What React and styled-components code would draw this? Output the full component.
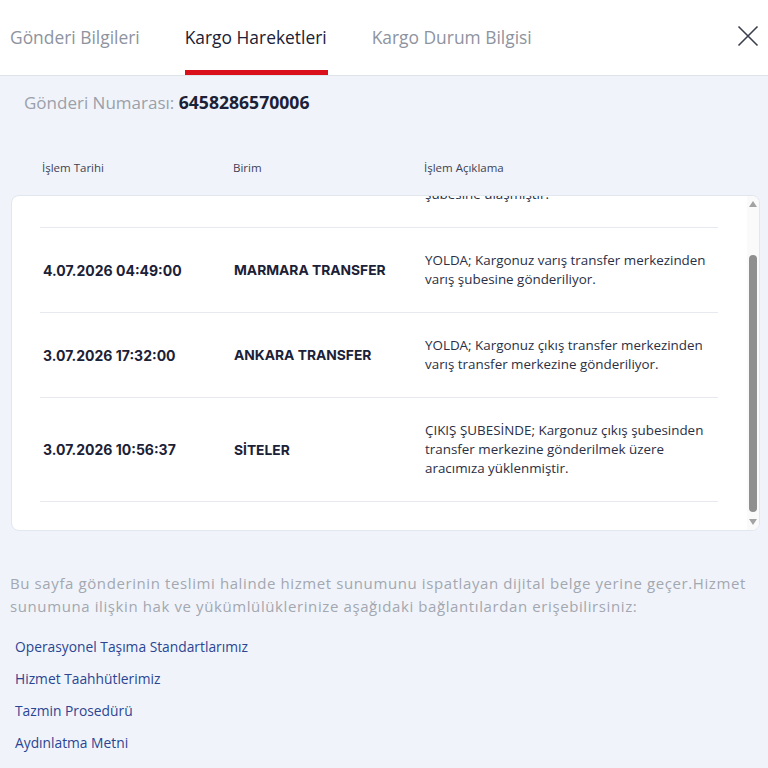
import { useEffect, useRef } from "react";
import styled, { createGlobalStyle } from "styled-components";

const GlobalStyle = createGlobalStyle`
  html, body {
    margin: 0;
    padding: 0;
    background: #f0f4fa;
    font-family: "Open Sans", "Liberation Sans", sans-serif;
  }
  * { box-sizing: border-box; }
`;

const Page = styled.div`
  width: 768px;
  min-height: 768px;
  background: #f0f4fa;
`;

const Header = styled.div`
  height: 76px;
  background: #ffffff;
  border-bottom: 1px solid #dfe3ea;
  display: flex;
  align-items: stretch;
  padding: 0 8px 0 10px;
`;

const Tabs = styled.div`
  display: flex;
  gap: 45px;
  flex: 1;
`;

const Tab = styled.div`
  position: relative;
  display: flex;
  align-items: center;
  padding-bottom: 2px;
  font-size: 17.4px;
  font-weight: 500;
  color: ${(p) => (p.$active ? "#1b2136" : "#8e93a0")};

  &::after {
    content: "";
    display: ${(p) => (p.$active ? "block" : "none")};
    position: absolute;
    left: 0;
    right: -1px;
    bottom: 0;
    height: 5px;
    background: #d9101b;
  }
`;

const CloseBtn = styled.button`
  border: none;
  background: none;
  padding: 0;
  width: 24px;
  height: 24px;
  align-self: center;
  margin-top: -3px;
  cursor: pointer;
`;

const Number = styled.div`
  padding: 14px 24px 0;
  font-size: 17px;
  color: #9ba0ab;
  height: 56px;

  b {
    color: #1b2136;
    font-weight: 700;
    font-size: 17.6px;
  }
`;

const TableHead = styled.div`
  display: grid;
  grid-template-columns: 191px 191px 1fr;
  padding: 28px 0 0 42px;
  height: 63px;
  font-size: 11.5px;
  color: #3d4254;
`;

const Card = styled.div`
  display: flex;
  margin: 0 8px 0 11px;
  height: 336px;
  background: #ffffff;
  border: 1px solid #e2e6ee;
  border-radius: 8px;
  overflow: hidden;
`;

const ScrollArea = styled.div`
  flex: 1;
  overflow: hidden;
`;

const Rows = styled.div`
  padding: 20px 29px 28px 28px;
`;

const Scrollbar = styled.div`
  width: 12px;
  display: flex;
  flex-direction: column;
  align-items: center;
  background: #fafafa;
`;

const Arrow = styled.div`
  height: 16px;
  display: flex;
  align-items: center;
  justify-content: center;
`;

const Thumb = styled.div`
  width: 8px;
  height: 257px;
  margin-top: 43px;
  margin-bottom: auto;
  border-radius: 4px;
  background: #8f8f8f;
`;

const Row = styled.div`
  display: grid;
  grid-template-columns: 191px 191px 1fr;
  align-items: center;
  min-height: ${(p) => p.$h}px;
  border-bottom: 1px solid #e6e9ef;
  padding-left: 3px;
`;

const DateCell = styled.div`
  font-family: Inter, "Open Sans", sans-serif;
  font-weight: 700;
  font-size: 14px;
  color: #1b2136;
`;

const UnitCell = styled.div`
  font-family: Inter, "Open Sans", sans-serif;
  font-weight: 700;
  font-size: 13.8px;
  color: #1b2136;
`;

const DescCell = styled.div`
  font-size: 13.4px;
  line-height: 19px;
  color: #2a2f45;
  padding-right: 6px;
  white-space: pre-line;
`;

const Note = styled.p`
  margin: 41px 0 0 10px;
  width: 740px;
  font-size: 15px;
  line-height: 23px;
  letter-spacing: 0.6px;
  color: #a3a7b1;
`;

const Links = styled.div`
  display: flex;
  flex-direction: column;
  gap: 14px;
  padding: 20px 15px 0;
`;

const LinkItem = styled.a`
  font-size: 13.8px;
  line-height: 18px;
  color: #2b4593;
  text-decoration: none;
`;

const rows = [
  {
    date: "4.07.2026 11:12:00",
    unit: "SİTELER",
    desc: "VARIŞ ŞUBESİNDE; Kargonuz varış\nşubesine ulaşmıştır.",
    h: 85,
  },
  {
    date: "4.07.2026 04:49:00",
    unit: "MARMARA TRANSFER",
    desc: "YOLDA; Kargonuz varış transfer merkezinden varış şubesine gönderiliyor.",
    h: 85,
  },
  {
    date: "3.07.2026 17:32:00",
    unit: "ANKARA TRANSFER",
    desc: "YOLDA; Kargonuz çıkış transfer merkezinden varış transfer merkezine gönderiliyor.",
    h: 85,
  },
  {
    date: "3.07.2026 10:56:37",
    unit: "SİTELER",
    desc: "ÇIKIŞ ŞUBESİNDE; Kargonuz çıkış şubesinden transfer merkezine gönderilmek üzere aracımıza yüklenmiştir.",
    h: 104,
  },
];

const Triangle = ({ down }) => (
  <svg width="8" height="6" viewBox="0 0 8 6">
    <path d={down ? "M0 0H8L4 6Z" : "M4 0L8 6H0Z"} fill="#a3a3a3" />
  </svg>
);

export default function App() {
  const areaRef = useRef(null);

  useEffect(() => {
    if (areaRef.current) areaRef.current.scrollTop = areaRef.current.scrollHeight;
  }, []);

  return (
    <Page>
      <GlobalStyle />
      <Header>
        <Tabs>
          <Tab>Gönderi Bilgileri</Tab>
          <Tab $active>Kargo Hareketleri</Tab>
          <Tab>Kargo Durum Bilgisi</Tab>
        </Tabs>
        <CloseBtn aria-label="Kapat">
          <svg width="24" height="24" viewBox="0 0 24 24">
            <path d="M2.5 2.5L21.5 21.5M21.5 2.5L2.5 21.5" stroke="#3a3f4d" strokeWidth="1.6" fill="none" />
          </svg>
        </CloseBtn>
      </Header>

      <Number>
        Gönderi Numarası: <b>6458286570006</b>
      </Number>

      <TableHead>
        <div>İşlem Tarihi</div>
        <div>Birim</div>
        <div>İşlem Açıklama</div>
      </TableHead>

      <Card>
        <ScrollArea ref={areaRef}>
          <Rows>
            {rows.map((r) => (
              <Row key={r.date} $h={r.h}>
                <DateCell>{r.date}</DateCell>
                <UnitCell>{r.unit}</UnitCell>
                <DescCell>{r.desc}</DescCell>
              </Row>
            ))}
          </Rows>
        </ScrollArea>
        <Scrollbar>
          <Arrow>
            <Triangle />
          </Arrow>
          <Thumb />
          <Arrow>
            <Triangle down />
          </Arrow>
        </Scrollbar>
      </Card>

      <Note>
        Bu sayfa gönderinin teslimi halinde hizmet sunumunu ispatlayan dijital belge yerine geçer.Hizmet
        sunumuna ilişkin hak ve yükümlülüklerinize aşağıdaki bağlantılardan erişebilirsiniz:
      </Note>

      <Links>
        <LinkItem href="#">Operasyonel Taşıma Standartlarımız</LinkItem>
        <LinkItem href="#">Hizmet Taahhütlerimiz</LinkItem>
        <LinkItem href="#">Tazmin Prosedürü</LinkItem>
        <LinkItem href="#">Aydınlatma Metni</LinkItem>
      </Links>
    </Page>
  );
}
